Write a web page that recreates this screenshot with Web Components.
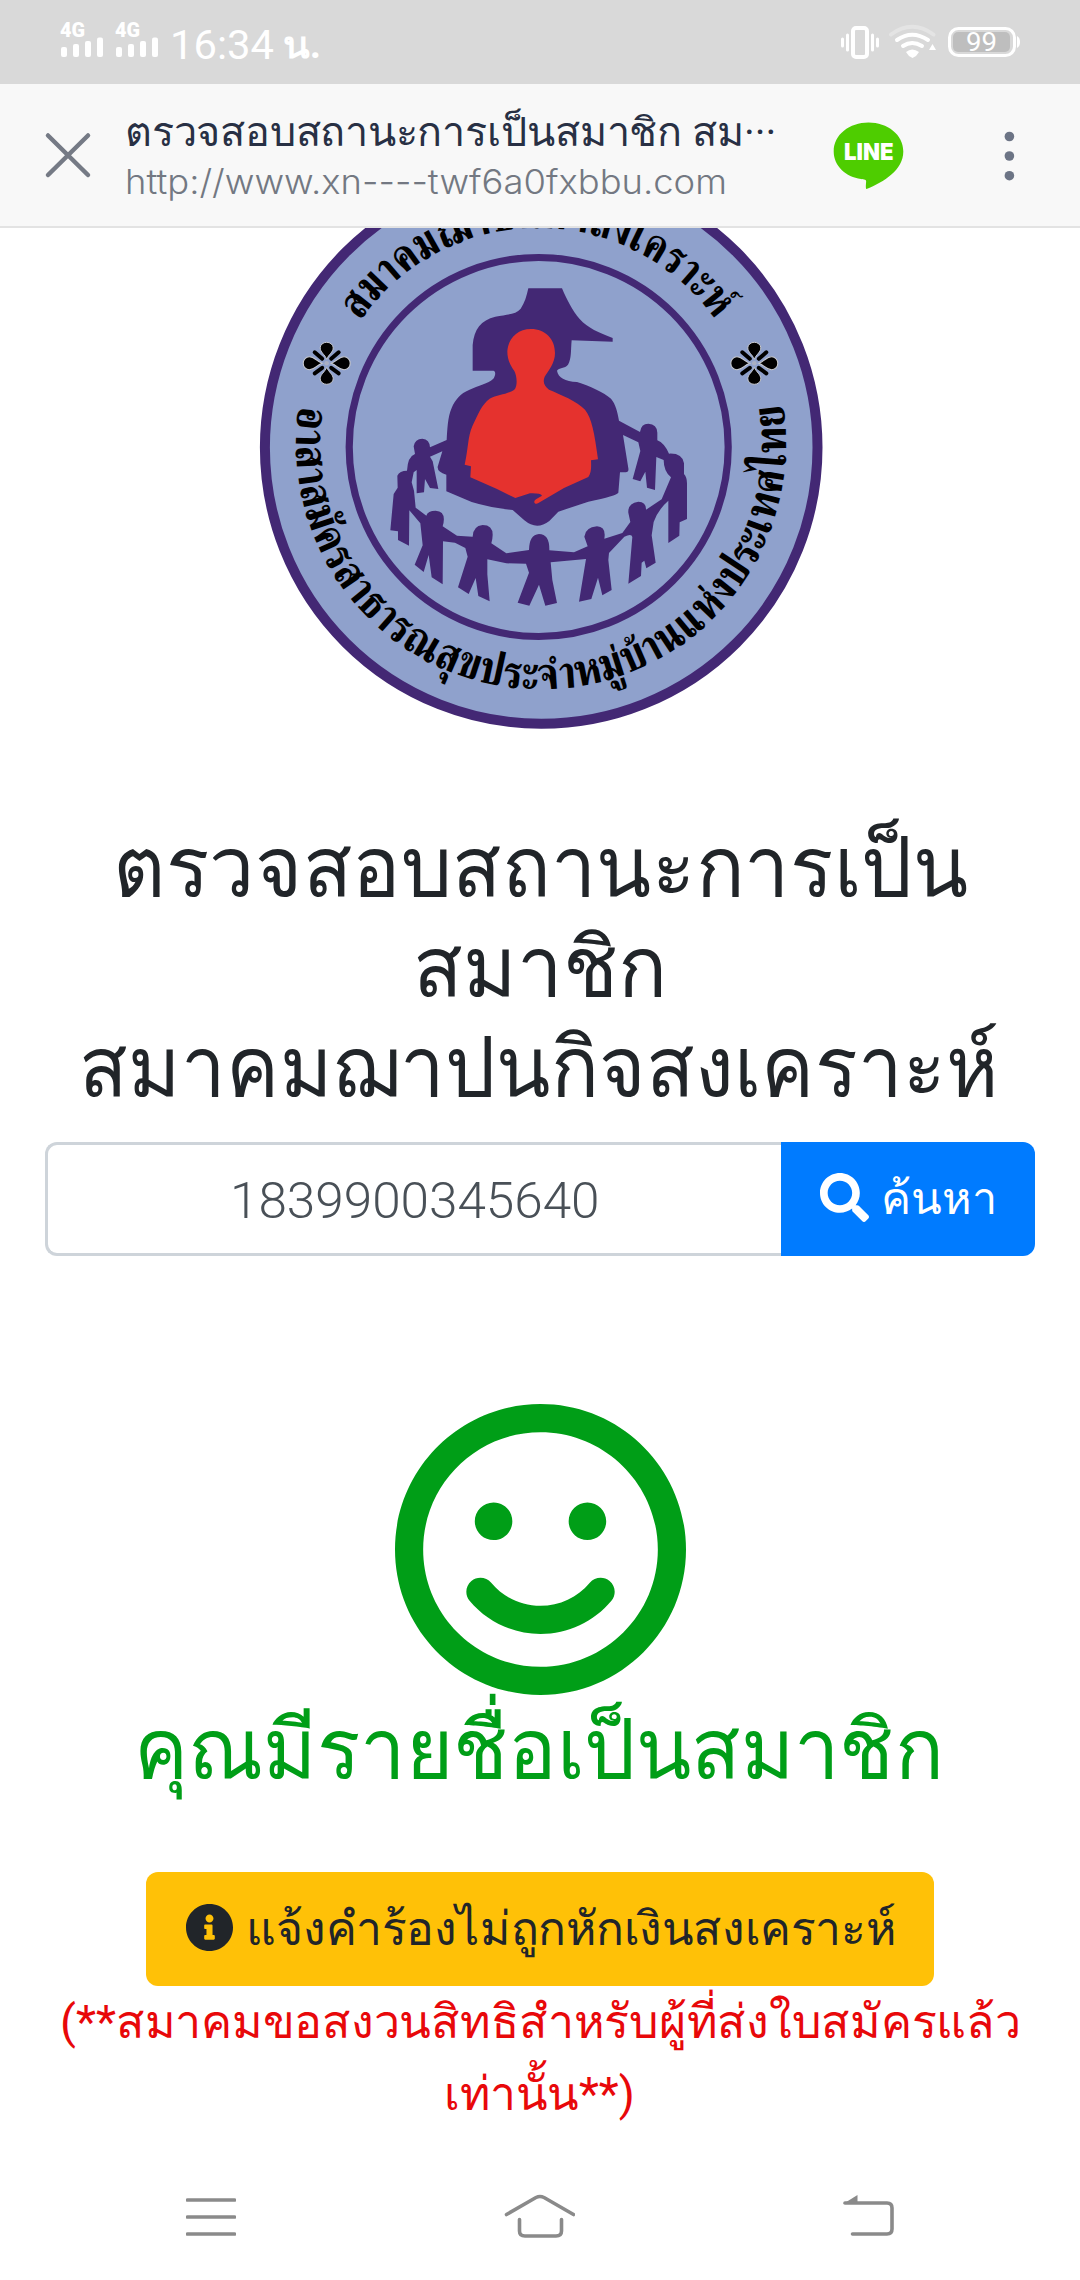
<!DOCTYPE html>
<html lang="th">
<head>
<meta charset="utf-8">
<title>ตรวจสอบสถานะการเป็นสมาชิก</title>
<style>
html,body{margin:0;padding:0;background:#fff}
body{width:1080px;height:2280px;overflow:hidden;font-family:Roboto,"Noto Sans",sans-serif}
</style>
</head>
<body>
<member-page></member-page>
<script>
const define = (name, html, after) => customElements.define(name, class extends HTMLElement {
  connectedCallback() {
    if (this.shadowRoot) return;
    const t = document.createElement('template');
    t.innerHTML = html;
    this.attachShadow({mode: 'open'}).appendChild(t.content.cloneNode(true));
    if (after) after(this);
  }
});

/* One line of text, stretched horizontally to the width given in "w". */
define('fit-line', `<style>
:host{display:block;white-space:nowrap;overflow:visible}
span{display:inline-block;vertical-align:top;transform-origin:0 50%}
</style><span></span>`, el => {
  const s = el.shadowRoot.querySelector('span');
  s.textContent = el.getAttribute('text');
  const w = +el.getAttribute('w');
  el.style.width = w + 'px';
  s.style.transform = `scaleX(${w / s.offsetWidth})`;
});

define('status-bar', `<style>
:host{display:flex;height:84px;background:#d9d9d9;color:#fff;box-sizing:border-box;padding:0 58px 0 60px;justify-content:space-between;align-items:flex-start}
svg{display:block}
text{font-family:Roboto,"Noto Sans",sans-serif;fill:#fff}
</style>
<svg width="270" height="84" viewBox="60 0 270 84" fill="#fff">
<text x="60" y="37" font-size="20.5" font-weight="900" textLength="25" lengthAdjust="spacingAndGlyphs">4G</text>
<text x="115" y="37" font-size="20.5" font-weight="900" textLength="25" lengthAdjust="spacingAndGlyphs">4G</text>
<g><rect x="61" y="47" width="6" height="10" rx="2"/><rect x="73" y="44" width="6" height="13" rx="2"/><rect x="85" y="41" width="6" height="16" rx="2"/><rect x="97" y="37.5" width="6" height="19.5" rx="2"/></g>
<g transform="translate(55 0)"><rect x="61" y="47" width="6" height="10" rx="2"/><rect x="73" y="44" width="6" height="13" rx="2"/><rect x="85" y="41" width="6" height="16" rx="2"/><rect x="97" y="37.5" width="6" height="19.5" rx="2"/></g>
<text x="170" y="59" font-size="41" textLength="104" lengthAdjust="spacingAndGlyphs">16:34</text>
<text x="283" y="58" font-size="38" font-weight="700" textLength="38" lengthAdjust="spacingAndGlyphs">น.</text>
</svg>
<svg width="182" height="84" viewBox="840 0 182 84" fill="none" stroke="#fff">
<rect x="853" y="28" width="14" height="29" rx="3" stroke-width="4"/>
<path d="M847.5 35v15M842.5 39v7M872.500 35v15M877.500 39v7" stroke-width="3" stroke-linecap="round"/>
<path d="M891 34.500Q912 19 933.500 34.500" stroke="#e4e4e4" stroke-width="4" stroke-linecap="round"/>
<path d="M897 40Q912 29.500 928 40M903 46Q912 40 922 46" stroke-width="4" stroke-linecap="round"/>
<path d="M906 52Q912 47 919 52Q917 56 912.500 58Q908 56 906 52ZM932.500 44l3.500 6h-7z" fill="#fff" stroke="none"/>
<rect x="949.500" y="28.500" width="65" height="27" rx="9" stroke-width="3"/>
<rect x="953" y="32" width="57" height="20" rx="5" fill="#bebebe" stroke="none"/>
<path d="M1017 36q3 1.500 3 6t-3 6z" fill="#fff" stroke="none"/>
<text x="966" y="51" font-size="25" stroke="none" textLength="31" lengthAdjust="spacingAndGlyphs">99</text>
</svg>`);

define('browser-bar', `<style>
:host{display:flex;height:144px;box-sizing:border-box;background:#f8f8f8;border-bottom:2px solid #e3e3e3;align-items:center}
svg{display:block;flex:none}
.t{display:flex;flex-direction:column;width:653px;margin-left:33px;height:142px;padding-top:4px;box-sizing:border-box;justify-content:center}
.a{font-size:40px;line-height:50px;color:#283044}
.b{font-family:Inter,Roboto,sans-serif;font-weight:300;font-size:34.5px;line-height:48px;color:#737882}
text{font-family:Inter,Roboto,sans-serif;font-weight:900}
</style>
<svg width="92" height="142" viewBox="0 84 92 142"><path d="M48 135.500L88 175M88 135.500L48 175" stroke="#757a85" stroke-width="4.500" stroke-linecap="round"/></svg>
<div class="t"><fit-line class="a" w="651" text="ตรวจสอบสถานะการเป็นสมาชิก สม···"></fit-line><fit-line class="b" w="602" text="http://www.xn----twf6a0fxbbu.com"></fit-line></div>
<svg width="302" height="142" viewBox="778 84 302 142">
<path d="M868.500 122.500C887.500 122.500 903.300 134.500 903.300 151.500C903.300 170 884 182 866.500 189Q865.500 189 866 183C867 179 864 179.500 861 179C846 177 833.700 166 833.700 151.500C833.700 134.500 849.500 122.500 868.500 122.500Z" fill="#4ecd00"/>
<text x="844" y="160" font-size="23" fill="#fff" textLength="49.500" lengthAdjust="spacingAndGlyphs">LINE</text>
<g fill="#6c7485"><circle cx="1009.400" cy="136.500" r="4.800"/><circle cx="1009.400" cy="156" r="4.800"/><circle cx="1009.400" cy="175.700" r="4.800"/></g>
</svg>`);

define('club-emblem', `<style>
:host{display:block;height:507px}
svg{display:block}
text{font-family:FreeSerif,"Noto Serif Thai",serif;font-weight:700;font-size:46px}
</style>
<svg width="1080" height="507" viewBox="0 228 1080 507">
<defs>
<path id="up" d="M360 321A217 217 0 0 1 719 325"/>
<path id="dn" d="M299 406A245 245 0 1 0 783 406"/>
<g id="f"><path d="M0-4C-2-9-6.500-11-6.500-15.500A6.500 5.500 0 0 1 6.500-15.500C6.500-11 2-9 0-4Z" stroke="#c7c9cf" stroke-width="1"/></g>
<g id="fl"><use href="#f"/><use href="#f" transform="rotate(180)"/><use href="#f" transform="rotate(90) scale(1 1.120)"/><use href="#f" transform="rotate(270) scale(1 1.120)"/>
<path d="M-4.500-4.500L-12-11M4.500-4.500L12-11M-4.500 4.500L-12 10M4.500 4.500L12 10" stroke="#000" stroke-width="4" stroke-linecap="round"/><circle r="2.300" fill="#aab0c4"/></g>
</defs>
<circle cx="541.200" cy="447.500" r="276.300" fill="#8fa1cc" stroke="#432874" stroke-width="10"/>
<circle cx="538.700" cy="447" r="189.500" fill="none" stroke="#432874" stroke-width="7.200"/>
<text><textPath href="#up" textLength="416" lengthAdjust="spacingAndGlyphs">สมาคมฌาปนกิจสงเคราะห์</textPath></text>
<text><textPath href="#dn" textLength="848" lengthAdjust="spacingAndGlyphs">อาสาสมัครสาธารณสุขประจำหมู่บ้านแห่งประเทศไทย</textPath></text>
<use href="#fl" x="326.700" y="363.300"/><use href="#fl" x="754.300" y="363.300"/>
<g transform="translate(375 270) scale(.33333)" fill="#432874">
<path d="M460 55H561C575 88 592 122 614 147C638 174 672 188 713 204V215L590 211C587 240 590 266 579 284C570 296 551 292 546 302C550 323 570 334 606 336C642 347 688 368 708 386C722 402 728 428 732 452L795 486Q798 461 820 461Q846 462 847 488V511Q868 519 882 551Q922 549 927 580V612Q936 622 936 640V747L914 757L913 797L880 819V692Q850 718 836 756L830 796L842 878L814 895L808 872L800 878L798 918L760 941L772 801Q770 790 748 800L702 849L700 870L710 960L682 976L669 923L649 987L612 995L633 867L527 877L532 930L546 999L511 1007L492 944L463 1007L428 998L462 908L453 881L394 880L337 868V913L344 994L310 978L302 924L281 972L249 952L278 860L271 834L240 818L204 814L203 943L170 922L161 855L146 906L119 884L143 826L136 760L103 721L102 827L69 810V784L46 781L56 672L68 653L67 617Q74 602 96 602Q98 560 120 552L116 529Q120 506 142 506Q164 508 165 532L215 510C217 480 218 440 230 414C240 390 257 370 282 360C310 346 340 341 355 326C362 317 363 303 355 302H293V225C297 178 318 150 361 140C396 133 422 134 437 116C449 99 455 78 460 55Z"/>
<path fill="#8fa1cc" d="M165 560L202 544L188 590Q186 606 214 614V664L290 696Q345 713 413 720L448 751Q485 782 523 753L550 725L640 695Q725 677 730 668L735 607H752Q762 606 760 595L744 495L790 517L796 543L773 627L796 634L811 605L816 653L840 660L844 561L866 570Q866 604 888 622L860 688L813 719Q814 696 790 695Q758 699 760 728L766 756L742 789L688 806Q694 770 666 769Q631 772 628 800L638 829L597 847L523 841Q524 792 492 792Q463 794 462 840L394 850L349 820Q364 765 323 765Q294 768 293 800L246 797L203 769Q216 724 182 722Q158 722 154 737L122 713L117 662L110 637L116 607L125 600V670L147 667L150 627L165 654L190 657L173 574Z"/>
<path fill="#e5322e" d="M468 177C511 177 540 207 540 249C540 279 521 301 509 320C502 338 509 350 522 359C555 373 607 394 630 419C650 443 659 491 669 568L648 571C649 591 649 609 640 621L567 654L489 700C479 704 473 695 483 688L501 677Q497 669 465 670L421 684L366 657L286 622L288 589L269 584C280 536 278 501 292 469C310 430 321 403 344 386C369 373 403 373 420 357C429 341 424 314 418 303C406 286 397 269 397 244C400 204 428 177 468 177Z"/>
</g>
</svg>`);

define('page-title', `<style>
:host{display:flex;flex-direction:column;align-items:flex-start;height:407px;box-sizing:border-box;padding-top:82.500px;font-size:83px;line-height:100px;color:#212529}
</style>
<fit-line style="margin-left:113px" w="855" text="ตรวจสอบสถานะการเป็น"></fit-line>
<fit-line style="margin-left:413px" w="254" text="สมาชิก"></fit-line>
<fit-line style="margin-left:79px" w="920" text="สมาคมฌาปนกิจสงเคราะห์"></fit-line>`);

define('search-box', `<style>
:host{display:flex;height:114px;margin:0 45px;line-height:60px}
.i{width:736px;box-sizing:border-box;border:3px solid #ced4da;border-right:0;border-radius:12px 0 0 12px;display:flex;align-items:center;justify-content:center;padding-top:3px;color:#495057;font-weight:340;font-size:50px}
.b{width:254px;background:#007bff;border-radius:0 12px 12px 0;display:flex;align-items:center;color:#fff;font-size:45px;gap:12px;padding-left:39px;box-sizing:border-box}
svg{margin-top:-4px}
</style>
<div class="i"><fit-line w="370" text="1839900345640"></fit-line></div>
<div class="b"><svg width="49" height="49" viewBox="0 0 512 512" fill="#fff"><path d="M505 442.700L405.300 343c-4.500-4.500-10.600-7-17-7H372c27.600-35.300 44-79.700 44-128C416 93.100 322.900 0 208 0S0 93.100 0 208s93.100 208 208 208c48.300 0 92.700-16.400 128-44v16.300c0 6.400 2.500 12.500 7 17l99.700 99.700c9.400 9.400 24.600 9.400 33.900 0l28.300-28.300c9.400-9.400 9.400-24.600.1-34zM208 336c-70.700 0-128-57.200-128-128 0-70.700 57.200-128 128-128 70.700 0 128 57.200 128 128 0 70.700-57.200 128-128 128z"/></svg>
<fit-line w="116" text="ค้นหา"></fit-line></div>`);

define('member-result', `<style>
:host{display:flex;flex-direction:column;height:616px;padding-top:148px;box-sizing:border-box;color:#009e17}
svg{display:block;margin-left:394.700px;flex:none}
.g{font-size:82px;line-height:100px;margin:5px 0 0 134px}
</style>
<svg width="291" height="291" viewBox="0 8 496 496" fill="currentColor"><path d="M248 8C111 8 0 119 0 256s111 248 248 248 248-111 248-248S385 8 248 8zm0 448c-110.300 0-200-89.700-200-200S137.700 56 248 56s200 89.700 200 200-89.700 200-200 200zm-80-216c17.700 0 32-14.300 32-32s-14.300-32-32-32-32 14.300-32 32 14.300 32 32 32zm160 0c17.700 0 32-14.300 32-32s-14.300-32-32-32-32 14.300-32 32 14.300 32 32 32zm4 72.600c-20.800 25-51.500 39.400-84 39.400s-63.200-14.300-84-39.400c-8.500-10.200-23.700-11.500-33.800-3.100-10.200 8.500-11.500 23.600-3.100 33.800 30 36 74.100 56.600 120.900 56.600s90.900-20.600 120.900-56.600c8.500-10.200 7.100-25.300-3.100-33.800-10.100-8.400-25.300-7.100-33.800 3.100z"/></svg>
<fit-line class="g" w="810" text="คุณมีรายชื่อเป็นสมาชิก"></fit-line>`);

define('claim-button', `<style>
:host{display:flex;align-items:center;width:788px;height:114px;margin-left:146px;box-sizing:border-box;padding-left:40px;gap:13px;background:#ffc107;border-radius:12px;color:#212529;font-size:47px;line-height:70px}
svg{margin-top:-4px}
</style>
<svg width="47" height="47" viewBox="8 8 496 496" fill="#212529"><path d="M256 8C119 8 8 119.100 8 256c0 137 111 248 248 248s248-111 248-248C504 119.100 393 8 256 8zm0 110c23.200 0 42 18.800 42 42s-18.800 42-42 42-42-18.800-42-42 18.800-42 42-42zm56 254c0 6.600-5.400 12-12 12h-88c-6.600 0-12-5.400-12-12v-24c0-6.600 5.400-12 12-12h12v-64h-12c-6.600 0-12-5.400-12-12v-24c0-6.600 5.400-12 12-12h64c6.600 0 12 5.400 12 12v100h12c6.600 0 12 5.400 12 12v24z"/></svg>
<fit-line w="650" text="แจ้งคำร้องไม่ถูกหักเงินสงเคราะห์"></fit-line>`);

define('foot-note', `<style>
:host{display:block;height:182px;color:#e8080a;font-size:47px;line-height:72px}
</style>
<fit-line style="margin-left:60px" w="961" text="(**สมาคมขอสงวนสิทธิสำหรับผู้ที่ส่งใบสมัครแล้ว"></fit-line>
<fit-line style="margin-left:444px" w="191" text="เท่านั้น**)"></fit-line>`);

define('nav-keys', `<style>
:host{display:flex;height:112px;padding:0 186px;justify-content:space-between}
svg{fill:none;stroke:#8a8a8a;stroke-width:3.600;stroke-linecap:round;stroke-linejoin:round}
</style>
<svg width="50" height="112" viewBox="186 2168 50 112"><path d="M187.500 2200h47M187.500 2217h47M187.500 2234h47"/></svg>
<svg width="72" height="112" viewBox="504 2168 72 112"><path d="M507.500 2214.500L537 2197.500Q541 2195.500 545 2197.500L574.500 2214.500M520.500 2219.500V2231Q520.500 2236 526 2236H557Q562.500 2236 562.500 2231V2219.500"/></svg>
<svg width="52" height="112" viewBox="842 2168 52 112"><path d="M852.500 2234H887Q892 2234 892 2229V2208Q892 2203 887 2203H845"/><path d="M843 2204L857.500 2195V2204Z" fill="#8a8a8a" stroke="none"/></svg>`);

define('member-page', `<style>:host{display:flex;flex-direction:column;width:1080px;height:2280px;background:#fff;overflow:hidden}:host>*{flex:none}</style>
<status-bar></status-bar><browser-bar></browser-bar><club-emblem></club-emblem><page-title></page-title>
<search-box></search-box><member-result></member-result><claim-button></claim-button><foot-note></foot-note><nav-keys></nav-keys>`);
</script>
</body>
</html>
